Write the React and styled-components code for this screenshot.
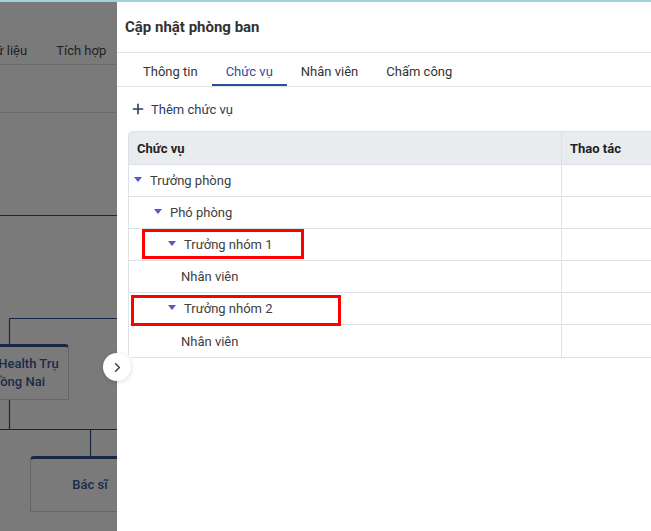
import React from "react";
import styled, { createGlobalStyle } from "styled-components";
import { ChevronRight, Plus } from "lucide-react";

const GlobalStyle = createGlobalStyle`
  html, body {
    margin: 0;
    padding: 0;
  }
  body {
    font-family: Roboto, "Noto Sans", sans-serif;
    background: #fff;
  }
  * {
    box-sizing: border-box;
  }
`;

const Screen = styled.div`
  position: relative;
  width: 651px;
  height: 531px;
  overflow: hidden;
`;

const LoadBar = styled.div`
  position: absolute;
  top: 0;
  left: 0;
  right: 0;
  height: 2px;
  background: #a3d3d8;
  z-index: 10;
`;

/* page underneath the drawer */
const Page = styled.div`
  display: flex;
  flex-direction: column;
  height: 100%;
`;

const Nav = styled.nav`
  height: 65px;
  border-bottom: 1px solid #dedede;
  display: flex;
  align-items: flex-end;
  padding-bottom: 6px;
`;

const NavList = styled.div`
  display: flex;
  gap: 29px;
  margin-left: -13px;
  font-size: 13px;
  color: #484848;
`;

const Toolbar = styled.div`
  height: 48px;
  border-bottom: 1px solid #dedede;
`;

const Canvas = styled.div`
  position: relative;
  flex: 1;
`;

const Links = styled.svg`
  position: absolute;
  top: 0;
  left: 0;
`;

const OrgNode = styled.div`
  position: absolute;
  left: ${(p) => p.$x}px;
  top: ${(p) => p.$y}px;
  width: 120px;
  height: 56px;
  border: 1px solid #d4d4d4;
  border-top: 3px solid #34508f;
  border-radius: 4px 4px 0 0;
  display: flex;
  align-items: center;
  justify-content: center;
  text-align: center;
  font-size: 13px;
  font-weight: 500;
  line-height: 18px;
  color: #3e5a9a;
  white-space: nowrap;
`;

const Overlay = styled.div`
  position: absolute;
  inset: 0;
  background: rgba(0, 0, 0, 0.52);
  z-index: 2;
`;

/* side drawer */
const Drawer = styled.aside`
  position: absolute;
  top: 0;
  left: 117px;
  width: 560px;
  height: 100%;
  background: #fff;
  z-index: 3;
  display: flex;
  flex-direction: column;
`;

const CollapseButton = styled.button`
  position: absolute;
  left: -14px;
  top: 353px;
  width: 28px;
  height: 28px;
  border: none;
  border-radius: 50%;
  background: #fff;
  box-shadow: 0 1px 5px rgba(0, 0, 0, 0.16);
  display: flex;
  align-items: center;
  justify-content: center;
  padding: 0;
  color: #3f4752;
  cursor: pointer;
`;

const DrawerHeader = styled.div`
  height: 53px;
  border-bottom: 1px solid #e4e4e4;
  padding: 2px 8px 0;
  display: flex;
  align-items: center;
  font-size: 15px;
  font-weight: 700;
  color: #333;
`;

const Tabs = styled.div`
  height: 34px;
  border-bottom: 1px solid #e4e4e4;
  padding-left: 12px;
  display: flex;
`;

const Tab = styled.div`
  padding: 4px 14px 0;
  display: flex;
  align-items: center;
  font-size: 13px;
  color: ${(p) => (p.$active ? "#2a4f9f" : "#333")};
  box-shadow: ${(p) => (p.$active ? "inset 0 -2px 0 #2a4f9f" : "none")};
`;

const AddRow = styled.div`
  height: 44px;
  padding-left: 13px;
  display: flex;
  align-items: center;
  gap: 5px;
  font-size: 13px;
  color: #2b3a67;
`;

const Table = styled.div`
  margin: 0 11px;
  width: 538px;
  border: 1px solid #dee2e6;
  border-radius: 4px;
`;

const Row = styled.div`
  display: grid;
  grid-template-columns: 432px 1fr;
  height: ${(p) => (p.$head ? 33 : 32)}px;
  border-bottom: 1px solid #dee2e6;
  background: ${(p) => (p.$head ? "#e9ecef" : "#fff")};
  font-size: 13px;
  font-weight: ${(p) => (p.$head ? 700 : 400)};
  color: ${(p) => (p.$head ? "#222" : "#404040")};

  &:last-child {
    border-bottom: none;
  }
`;

const Cell = styled.div`
  position: relative;
  display: flex;
  align-items: center;
  padding-left: ${(p) => (p.$head ? 8 : 5)}px;
  & + & {
    border-left: 1px solid #dee2e6;
  }
`;

const Indent = styled.span`
  display: inline-block;
  width: ${(p) => p.$w}px;
  flex: none;
`;

const Caret = styled.span`
  width: 0;
  height: 0;
  border-left: 4px solid transparent;
  border-right: 4px solid transparent;
  border-top: 5px solid #5656d8;
  margin-right: 8px;
  margin-top: -3px;
  flex: none;
`;

const Mark = styled.span`
  position: absolute;
  left: ${(p) => p.$x}px;
  top: ${(p) => p.$y}px;
  width: ${(p) => p.$w}px;
  height: ${(p) => p.$h}px;
  border: 3px solid #f00;
  pointer-events: none;
`;

const positions = [
  { name: "Trưởng phòng", indent: 0, open: true },
  { name: "Phó phòng", indent: 20, open: true },
  { name: "Trưởng nhóm 1", indent: 34, open: true, mark: { x: 13, y: 0, w: 162, h: 30 } },
  { name: "Nhân viên", indent: 47 },
  { name: "Trưởng nhóm 2", indent: 34, open: true, mark: { x: 2, y: 2, w: 210, h: 31 } },
  { name: "Nhân viên", indent: 47 },
];

const tabs = ["Thông tin", "Chức vụ", "Nhân viên", "Chấm công"];

function OrgChart() {
  return (
    <Canvas>
      <Links width="651" height="420">
        <g stroke="#34508f" strokeWidth="1.2" fill="none">
          <line x1="0" y1="102.5" x2="651" y2="102.5" />
          <line x1="9.5" y1="205.5" x2="651" y2="205.5" />
          <line x1="9.5" y1="205" x2="9.5" y2="231" />
          <line x1="9.5" y1="287" x2="9.5" y2="316" />
          <line x1="0" y1="316.5" x2="651" y2="316.5" />
          <line x1="90.5" y1="316" x2="90.5" y2="343" />
        </g>
      </Links>
      <OrgNode $x={-51} $y={231}>
        Medic Health Trụ
        <br />
        Sở Đồng Nai
      </OrgNode>
      <OrgNode $x={30} $y={343}>
        Bác sĩ
      </OrgNode>
    </Canvas>
  );
}

export default function App() {
  return (
    <Screen>
      <GlobalStyle />
      <LoadBar />
      <Page>
        <Nav>
          <NavList>
            <span>Dữ liệu</span>
            <span>Tích hợp</span>
          </NavList>
        </Nav>
        <Toolbar />
        <OrgChart />
      </Page>
      <Overlay />
      <Drawer>
        <CollapseButton aria-label="Thu gọn">
          <ChevronRight size={15} strokeWidth={2.6} />
        </CollapseButton>
        <DrawerHeader>Cập nhật phòng ban</DrawerHeader>
        <Tabs>
          {tabs.map((t) => (
            <Tab key={t} $active={t === "Chức vụ"}>
              {t}
            </Tab>
          ))}
        </Tabs>
        <AddRow>
          <Plus size={16} strokeWidth={2.4} />
          Thêm chức vụ
        </AddRow>
        <Table>
          <Row $head>
            <Cell $head>Chức vụ</Cell>
            <Cell $head>Thao tác</Cell>
          </Row>
          {positions.map((p, i) => (
            <Row key={i}>
              <Cell>
                <Indent $w={p.indent} />
                {p.open && <Caret />}
                {p.name}
                {p.mark && (
                  <Mark $x={p.mark.x} $y={p.mark.y} $w={p.mark.w} $h={p.mark.h} />
                )}
              </Cell>
              <Cell />
            </Row>
          ))}
        </Table>
      </Drawer>
    </Screen>
  );
}
